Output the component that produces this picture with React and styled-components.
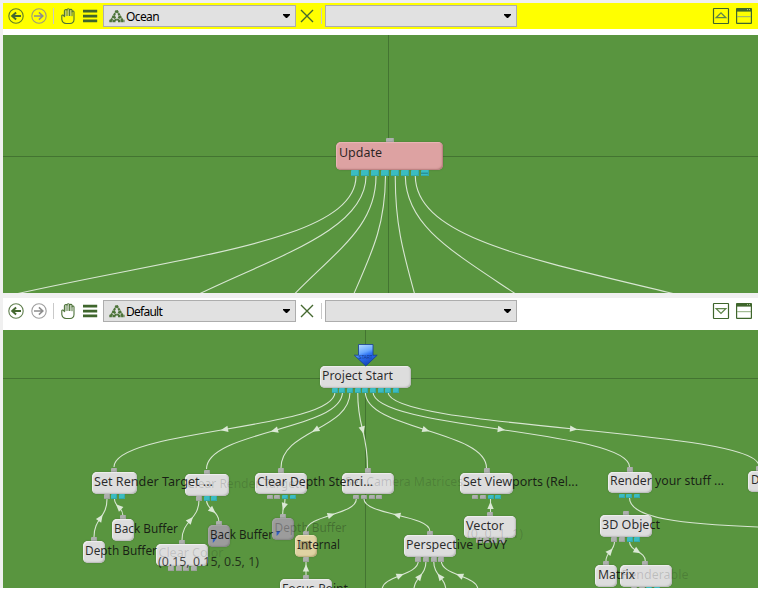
import React from "react";
import styled, { createGlobalStyle } from "styled-components";

const GlobalStyle = createGlobalStyle`
  * { box-sizing: border-box; }
  body { margin: 0; background: #fff; overflow: hidden; font-family: "Noto Sans", "Open Sans", sans-serif; }
`;

const Window = styled.main`
  width: 758px;
  height: 588px;
  padding: 3px 0 0 3px;
  background: #f0f0f0;
  display: flex;
  flex-direction: column;
  gap: 5px;
`;
const Pane = styled.section`
  display: flex;
  flex-direction: column;
  height: 290px;
`;
const ToolbarWrap = styled.div`
  height: 32px;
  background: #fff;
  flex: none;
`;
const Toolbar = styled.div`
  height: 26px;
  display: flex;
  align-items: center;
  padding: 0 6px 0 5px;
  background: ${(p) => (p.$active ? "#ffff00" : "#ffffff")};
`;
const ToolIcon = styled.svg`
  display: block;
  width: 16px;
  height: 16px;
  flex: none;
  margin-right: ${(p) => p.$gap || 0}px;
  overflow: visible;
`;
const Separator = styled.span`
  width: 1px;
  height: 16px;
  flex: none;
  background: #c9c9c9;
  margin-right: ${(p) => p.$gap}px;
`;
const Combo = styled.div`
  width: ${(p) => p.$width}px;
  height: 22px;
  flex: none;
  display: flex;
  align-items: center;
  padding: 0 5px;
  border: 1px solid #adadad;
  background: #e1e1e1;
  margin-right: ${(p) => p.$gap || 0}px;
`;
const ComboText = styled.span`
  flex: 1;
  margin-left: 1px;
  font: 12px/18px "Noto Sans", sans-serif;
  letter-spacing: ${(p) => p.$track || 0}px;
  color: #000;
  padding-top: 2px;
`;
const Caret = styled.svg`
  width: 7px;
  height: 4px;
  flex: none;
`;
const Spacer = styled.span`
  flex: 1;
`;

const Canvas = styled.div`
  position: relative;
  height: 258px;
  width: 755px;
  overflow: hidden;
  background: #59953f;
`;
const Wires = styled.svg`
  position: absolute;
  inset: 0;
  width: 755px;
  height: 258px;
`;
const tones = {
  light: ["#dddddd", "#efefef", "#b9b9b9"],
  pink: ["#dda2a2", "#e9b6b6", "#b57b7b"],
  dark: ["#9c9c9c", "#a6a6a6", "#858585"],
  tan: ["#dfd3a3", "#ebe1b8", "#b8a978"],
};
const NodeBox = styled.div`
  position: absolute;
  left: ${(p) => p.$x}px;
  top: ${(p) => p.$y}px;
  width: ${(p) => p.$w}px;
  height: ${(p) => p.$h}px;
  border-radius: 5px;
  background: ${(p) => tones[p.$tone][0]};
  box-shadow: inset 1px 1px 1px ${(p) => tones[p.$tone][1]}, inset -1px -1px 1.5px ${(p) => tones[p.$tone][2]},
    0 0 1.5px rgba(50, 70, 40, 0.55);
`;
const Port = styled.i`
  position: absolute;
  left: ${(p) => p.$x}px;
  top: ${(p) => p.$y}px;
  width: ${(p) => p.$w}px;
  height: ${(p) => p.$h}px;
  border-radius: 1px;
  background: ${(p) => (p.$teal ? "#3bbcc2" : "#adb0ad")};
  box-shadow: inset -1px -1px 0 ${(p) => (p.$teal ? "#33a9ab" : "#9da19d")};
`;
const LabelText = styled.svg`
  position: absolute;
  inset: 0;
  width: 755px;
  height: 258px;
  font: 12.5px "Noto Sans", sans-serif;
`;

function HandIcon() {
  return (
    <ToolIcon $gap={6} viewBox="0 0 16 16" fill="none" stroke="#4d7239" strokeLinecap="round" strokeLinejoin="round">
      <path
        strokeWidth="1.1"
        d="M4.4 8.6L3.4 7.2Q2.4 6.6 1.8 7.6V11.4Q2.4 15.4 6 15.5H10Q13.9 15.4 14 11.5V4Q13.9 3 13 3T12 4V2.4Q11.9 1.4 10.8 1.4T9.6 2.2Q9.5.7 8.3.7T7 2.2Q6.8 1.4 5.8 1.6T4.4 3Z"
      />
      <path strokeWidth="1" d="M7 2.2V7.6M9.6 2.2V7.6M12 3.6V7.8" />
      <path strokeWidth="1" stroke="#a5ba99" d="M5.7 3V8M8.3 2V7.6M10.8 2.6V7.6" />
    </ToolIcon>
  );
}

function DirectionIcon({ forward, gap }) {
  const c = forward ? "#8d8d8d" : "#44682f";
  return (
    <ToolIcon $gap={gap} viewBox="0 0 16 16" fill="none" stroke={c}>
      <circle cx="8" cy="8" r="7.2" strokeWidth="1.1" opacity=".85" />
      <path
        d={forward ? "M3 8H12M7.9 4.4L11.8 8L7.9 11.6" : "M13 8H4M8.1 4.4L4.2 8L8.1 11.6"}
        strokeWidth={forward ? 1.6 : 2}
      />
    </ToolIcon>
  );
}

function PaneToolbar({ active, name, down, track }) {
  return (
    <ToolbarWrap>
      <Toolbar $active={active}>
        <DirectionIcon gap={7} />
        <DirectionIcon forward gap={6} />
        <Separator $gap={6} />
        <HandIcon />
        <ToolIcon $gap={5} viewBox="0 0 16 16" fill="#3f662c">
          <path d="M1 1.8h14.2v2.7H1zM1 6.7h14.2v2.7H1zM1 11.6h14.2v2.7H1z" />
        </ToolIcon>
        <Combo $width={193} $gap={3}>
          <ToolIcon viewBox="0 0 16 16" stroke="#4c7338" fill="none" strokeWidth="2.1">
            <path d="M7.6 2.6L2 12.6M7.8 2.6L13.6 12.6M5.1 8.3L7.2 12.6M10.7 8.3L8.6 12.6" strokeDasharray="2.5 .5" />
            <path d="M.3 13H7M9 13H15.7" strokeWidth="2.3" strokeDasharray="2.6 .5" />
          </ToolIcon>
          <ComboText $track={track}>{name}</ComboText>
          <Caret viewBox="0 0 7 4"><path d="M0 0H7V1L4 4H3L0 1Z" /></Caret>
        </Combo>
        <ToolIcon $gap={6} viewBox="0 0 16 16" stroke="#44682f" strokeWidth="1.4">
          <path d="M2 2L14 14M14 2L2 14" />
        </ToolIcon>
        <Separator $gap={3} />
        <Combo $width={192}>
          <Spacer />
          <Caret viewBox="0 0 7 4"><path d="M0 0H7V1L4 4H3L0 1Z" /></Caret>
        </Combo>
        <Spacer />
        <ToolIcon $gap={7} viewBox="0 0 16 16" fill="none" stroke="#3f662c">
          <rect x=".5" y=".5" width="15" height="15" rx=".5" strokeWidth="1.2" />
          <path stroke="#5f864a" strokeWidth="1.3" d={down ? "M3.2 5.6H12.8L8 10.4Z" : "M3.2 9.7H12.8L8 4.9Z"} />
        </ToolIcon>
        <ToolIcon viewBox="0 0 16 16" fill="none" stroke="#3f662c">
          <rect x=".6" y=".6" width="14.8" height="14.8" rx=".5" strokeWidth="1.2" />
          <path d="M.5 2H15.5" strokeWidth="3.2" />
          <path d="M1 8.7H15" stroke="#8fad7e" />
          <path d="M11 1.6h1M13 1.6h1" stroke="#adc4a0" />
        </ToolIcon>
      </Toolbar>
    </ToolbarWrap>
  );
}

/* Node coordinates are window coordinates; each canvas subtracts its own origin. */
function Node({ oy, x, y, w, h = 21.5, tone = "light", input, ports = "", first = 0, step = 7.7, size = 6, portH = 4.5 }) {
  return (
    <>
      <NodeBox $x={x - 3} $y={y - oy} $w={w} $h={h} $tone={tone} />
      {input && <Port $x={input - 3 - size / 2} $y={y - oy - 4.5} $w={size} $h={4.5} />}
      {[...ports].map((c, i) => (
        <Port key={i} $x={first + i * step - 3 - size / 2} $y={y + h - oy + 0.5} $w={size} $h={portH} $teal={c === "t"} />
      ))}
    </>
  );
}

const lowerNodes = [
  { x: 320, y: 366, w: 90.5, ports: "ttttttttt", first: 334.7, step: 7.67 },
  { x: 92, y: 472.3, w: 44.5, input: 114.3, ports: "gtt", first: 106.7 },
  { x: 184.5, y: 474, w: 44.5, input: 206.5, ports: "gtt", first: 199 },
  { x: 112, y: 519, w: 21.5, input: 122.8 },
  { x: 83, y: 541.3, w: 21.7, input: 94 },
  { x: 156.3, y: 544, w: 52, input: 182, ports: "gggg", first: 171 },
  { x: 208, y: 525, w: 21.7, input: 218.8, tone: "dark" },
  { x: 255.2, y: 472.8, w: 52.3, input: 281.2, ports: "ggtt", first: 269.7 },
  { x: 272, y: 518.3, w: 21.5, input: 282.7, tone: "dark" },
  { x: 341.8, y: 472.8, w: 52, input: 367.5, ports: "gggg", first: 356.3 },
  { x: 295, y: 535, w: 21.7, input: 306, ports: "g", first: 306, tone: "tan" },
  { x: 280, y: 579, w: 52, input: 306 },
  { x: 403.8, y: 535, w: 52.3, input: 429.8, ports: "gggg", first: 418.3 },
  { x: 460.3, y: 472.8, w: 52.3, input: 486.5, ports: "ggtt", first: 475.2 },
  { x: 464.2, y: 516, w: 52, input: 490, ports: "gggg", first: 478.7 },
  { x: 607.5, y: 471.5, w: 44.5, input: 629.5, ports: "ttt", first: 621.7 },
  { x: 599.6, y: 515.3, w: 52.3, input: 625.5, ports: "ggtt", first: 614.2 },
  { x: 595.4, y: 565.2, w: 21.5, input: 606 },
  { x: 619.5, y: 565, w: 52, input: 645.3, ports: "ggtt", first: 634 },
  { x: 748.3, y: 470.8, w: 44, input: 759 },
];

const link = (x1, y1, x2, y2, dir) => ({ x1, y1, x2, y2, dir });
const lowerLinks = [
  link(335, 392, 114, 467, 1), link(342.5, 392, 206.5, 469, 1), link(350, 392, 281, 468, 1),
  link(357.7, 392, 367.5, 468, 1), link(365.3, 392, 486.5, 468, 1), link(373, 392, 629.5, 467, 1),
  link(388, 392, 759, 466, 1), link(107, 499, 94, 537, -1), link(114.5, 499, 122.8, 515, -1),
  link(199, 500, 182, 540, -1), link(206.5, 500, 218.8, 521, 1), link(285, 499, 282.7, 514, 1),
  link(356.3, 499, 306, 531, -1), link(364, 499, 429.8, 531, -1), link(306, 561, 306, 575, -1),
  link(490.5, 499, 490.5, 512, -1), link(418.3, 561, 382, 590, -1), link(426, 561, 413.7, 592, -1),
  link(433.7, 561, 446, 592, -1), link(441.3, 561, 478, 590, -1),
  link(614.5, 541.5, 606, 561, -1), link(629.5, 541.5, 645.3, 561, 1),
];

function Link({ x1, y1, x2, y2, dir }) {
  const k = (y2 - y1) * 0.5;
  let angle = (Math.atan2((y2 - y1) * 2 - 2 * k, (x2 - x1) * 2) * 180) / Math.PI;
  if (dir < 0) angle += 180;
  return (
    <g>
      <path d={`M${x1} ${y1}C${x1} ${y1 + k} ${x2} ${y2 - k} ${x2} ${y2}`} />
      <path
        transform={`translate(${(x1 + x2) / 2} ${(y1 + y2) / 2}) rotate(${angle})`}
        d="M-3.5 -3.2L3.8 0L-3.5 3.2Z"
        fill="#dbe8d5"
        stroke="none"
      />
    </g>
  );
}

/* [text, left, baseline, width, opacity] */
const ghostLabels = [
  ["Clear Render Target...", 187, 488, 122, 0.16],
  ["Clear Color", 158.5, 557, 65, 0.15],
  ["Depth Buffer", 274.5, 532, 72, 0.28],
  ["Set Camera Matrices", 345, 486, 118, 0.16],
  ["(0, 0, 1, 1)", 467, 538, 56, 0.16],
  ["Renderable", 621.5, 579, 67, 0.16],
];
const lowerLabels = [
  ["Project Start", 322, 380, 71],
  ["Set Render Target ...", 94, 486, 119],
  ["Back Buffer", 114, 533, 64],
  ["Depth Buffer", 85, 555, 72],
  ["(0.15, 0.15, 0.5, 1)", 158, 566, 101, 0.75],
  ["Back Buffer", 210, 539, 63],
  ["Clear Depth Stenci...", 257, 486, 116],
  ["Internal", 297, 549, 43],
  ["Focus Point", 282, 592.5, 66],
  ["Perspective FOVY", 406, 549, 101],
  ["Set Viewports (Rel...", 463, 486, 115],
  ["Vector", 466, 530, 38],
  ["Render your stuff ...", 610, 485, 114],
  ["3D Object", 602, 529, 58],
  ["Matrix", 598, 579, 37],
  ["D", 751, 484, 8.5],
];

function Labels({ items, oy }) {
  return (
    <LabelText viewBox={`3 ${oy} 755 258`}>
      {items.map(([text, x, y, width, opacity = 0.88], i) => (
        <text key={i} x={x} y={y} textLength={width} lengthAdjust="spacingAndGlyphs" fill="#101010" fillOpacity={opacity}>
          {text}
        </text>
      ))}
    </LabelText>
  );
}

function UpperCanvas() {
  return (
    <Canvas>
      <Wires viewBox="3 35 755 258" fill="none" stroke="#d8e6d2" strokeWidth="1.1">
        <path d="M3 156.5H758M388.5 35V293" stroke="#437431" strokeWidth="1" />
        <path d="M356 176C356 240 190 255 18 293.5" />
        <path d="M366 176C366 230 275 257 200 293.5" />
        <path d="M376 176C376 225 340 248 295 293.5" />
        <path d="M385.5 176C385 225 373 250 354 293.5" />
        <path d="M395.3 176C395 225 404 255 414.5 293.5" />
        <path d="M405.3 176C406 225 450 250 515 293.5" />
        <path d="M415.3 176C416 237 530 259 673 293.5" />
      </Wires>
      <Node oy={35} x={336.3} y={142} w={106.5} h={27.8} tone="pink" input={389.5} ports="tttttttt" first={355.3} step={9.9} size={8} portH={5.5} />
      <Wires viewBox="3 35 755 258"><path d="M421 173.2h7" stroke="#227f86" /></Wires>
      <Labels oy={35} items={[["Update", 339, 157, 43]]} />
    </Canvas>
  );
}

function LowerCanvas() {
  return (
    <Canvas>
      <Wires viewBox="3 330 755 258" fill="none" stroke="#d8e6d2" strokeWidth="1.1">
        <path d="M3 378.5H758M365.5 330V588" stroke="#437431" strokeWidth="1" />
        {lowerLinks.map((l, i) => <Link key={i} {...l} />)}
        <path d="M629.5 498C629.5 519 685 524 759 527" />
      </Wires>
      {lowerNodes.map((n, i) => <Node key={i} oy={330} {...n} />)}
      <Wires viewBox="3 330 755 258">
        <defs>
          <linearGradient id="startArrow" x1="0" y1="0" x2="0.4" y2="1">
            <stop offset="0" stopColor="#c5e6ff" />
            <stop offset=".45" stopColor="#68a8ff" />
            <stop offset=".6" stopColor="#2f74f4" />
            <stop offset="1" stopColor="#1546be" />
          </linearGradient>
        </defs>
        <path d="M358.5 344.5H373V355.2H377.2L365.8 366L354.3 355.2H358.5Z" fill="url(#startArrow)" stroke="#173d94" strokeWidth=".8" />
        <text x="358.5" y="359.3" fontSize="4.5" fontFamily="Liberation Sans, sans-serif" fill="#12368a" textLength="14">START</text>
        <path d="M212.8 543V538H216.3L214.6 541Z" fill="#315fc0" />
        <path d="M276.6 536V531H280.4L278.6 534Z" fill="#315fc0" />
        <rect x="300" y="541" width="11" height="9" fill="#b3a574" />
      </Wires>
      <Labels oy={330} items={ghostLabels} />
      <Labels oy={330} items={lowerLabels} />
    </Canvas>
  );
}

export default function App() {
  return (
    <>
      <GlobalStyle />
      <Window>
        <Pane>
          <PaneToolbar active name="Ocean" track={-0.6} />
          <UpperCanvas />
        </Pane>
        <Pane>
          <PaneToolbar name="Default" down track={-0.75} />
          <LowerCanvas />
        </Pane>
      </Window>
    </>
  );
}
